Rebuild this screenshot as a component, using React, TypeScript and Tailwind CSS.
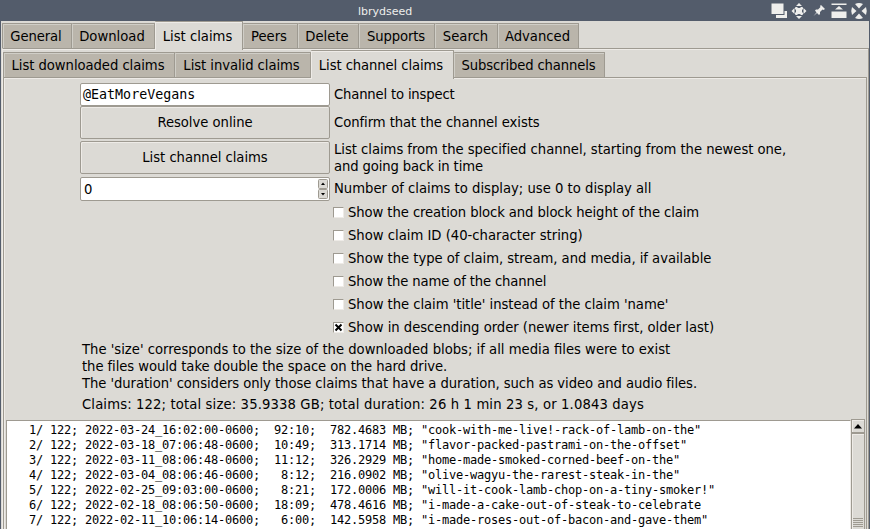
import React from "react";

const outerTabs = [
  { label: "General", w: "w-[70px] pr-[2px] tracking-[-0.1px]" },
  { label: "Download", w: "w-[83px] pr-[2px]" },
  { label: "List claims", w: "w-[88px] pr-[2px]" },
  { label: "Peers", w: "w-[55px] pr-[2px]" },
  { label: "Delete", w: "w-[61px] pr-[2px]" },
  { label: "Supports", w: "w-[76px] pr-px tracking-[-0.1px]" },
  { label: "Search", w: "w-[63px] pr-px" },
  { label: "Advanced", w: "w-[81px] pr-px" },
];
const innerTabs = [
  { label: "List downloaded claims", w: "w-[172px] pr-[2px] tracking-[-0.05px]" },
  { label: "List invalid claims", w: "w-[136px] pr-[2px] tracking-[-0.06px]" },
  { label: "List channel claims", w: "w-[143px] pr-[2px] tracking-[-0.09px]" },
  { label: "Subscribed channels", w: "w-[151px] pr-px tracking-[-0.13px]" },
];
const checks = [
  { label: "Show the creation block and block height of the claim", ls: "tracking-[-0.08px]" },
  { label: "Show claim ID (40-character string)", ls: "" },
  { label: "Show the type of claim, stream, and media, if available", ls: "tracking-[-0.03px]" },
  { label: "Show the name of the channel", ls: "tracking-[-0.14px]" },
  { label: "Show the claim 'title' instead of the claim 'name'", ls: "tracking-[-0.04px]" },
  { label: "Show in descending order (newer items first, older last)", ls: "tracking-[-0.02px]" },
];
const claims = [
  `  1/ 122; 2022-03-24_16:02:00-0600;  92:10;  782.4683 MB; "cook-with-me-live!-rack-of-lamb-on-the"`,
  `  2/ 122; 2022-03-18_07:06:48-0600;  10:49;  313.1714 MB; "flavor-packed-pastrami-on-the-offset"`,
  `  3/ 122; 2022-03-11_08:06:48-0600;  11:12;  326.2929 MB; "home-made-smoked-corned-beef-on-the"`,
  `  4/ 122; 2022-03-04_08:06:46-0600;   8:12;  216.0902 MB; "olive-wagyu-the-rarest-steak-in-the"`,
  `  5/ 122; 2022-02-25_09:03:00-0600;   8:21;  172.0006 MB; "will-it-cook-lamb-chop-on-a-tiny-smoker!"`,
  `  6/ 122; 2022-02-18_08:06:50-0600;  18:09;  478.4616 MB; "i-made-a-cake-out-of-steak-to-celebrate`,
  `  7/ 122; 2022-02-11_10:06:14-0600;   6:00;  142.5958 MB; "i-made-roses-out-of-bacon-and-gave-them"`,
];

function Tabs({ tabs, active }: { tabs: { label: string; w: string }[]; active: number }) {
  return (
    <div className="flex h-[27px] items-end">
      {tabs.map((t, i) => (
        <div
          key={t.label}
          className={`${t.w} relative flex shrink-0 items-center justify-center rounded-t-[1px] border-t border-r border-[#9e9a91] ${
            i === active
              ? "z-10 -mb-[2px] h-[29px] bg-[#dcdad5] pb-[2px] shadow-[inset_1px_1px_0_#eeebe7]"
              : "h-[25px] bg-[#bab5ab] pb-[2px] shadow-[inset_1px_1px_0_#d0cec7]"
          } ${i === 0 ? "border-l" : ""}`}
        >
          {t.label}
        </div>
      ))}
    </div>
  );
}

function Button({ children }: { children: React.ReactNode }) {
  return (
    <div className="flex h-[33px] w-[250px] items-center justify-center rounded-[2px] border border-[#9e9a91] pb-[2px] tracking-[-0.03px] shadow-[inset_1px_1px_0_#eeebe7]">
      {children}
    </div>
  );
}

function TitleIcons() {
  return (
    <svg width="120" height="21" viewBox="750 0 120 21" fill="#eeeeec">
      <path d="M771.500 3.500h12v10.500h-12zM784.500 11h2.500v7h-11v-3h8.500z" />
      <path d="M799 3l3 3h-6zM799 19l3-3h-6zM791.500 11l3-3v6zM806.500 11l-3-3v6zM796 8h6v6h-6z" />
      <path d="M795.500 9.500v-2h2M800.500 7.500h2v2M802.500 12.500v2h-2M797.500 14.500h-2v-2" fill="none" stroke="#eeeeec" />
      <path d="M821 5l4 4-1.500 1-1-.5-2.500 2.500v2l-1 1-2-2-3.500 3 3-3.500-1.500-2 1-1h2l2.500-2.500-.5-1z" />
      <path d="M831.500 3.500h15v1.500h-15zM839 6l4 3.500h-8zM831.500 11.500h15v6.500h-15z" />
      <path d="M855 4q4-2 8 0l-4 4.500zM855 18q4 2 8 0l-4-4.500zM852 7q-1.500 4 0 8l4.500-4zM866 7q1.500 4 0 8l-4.500-4z" />
    </svg>
  );
}

export default function App() {
  return (
    <div className="h-[529px] w-[870px] overflow-hidden bg-[#535c6b] font-['DejaVu_Sans_Condensed','DejaVu_Sans',sans-serif] text-[14.67px] leading-[17px] [font-stretch:condensed] whitespace-nowrap text-black">
      <div className="flex h-[21px] items-center justify-between font-['DejaVu_Sans',sans-serif] text-[11px] [font-stretch:normal] text-[#eeeeec]">
        <span className="pt-[2px] pl-[358px]">lbrydseed</span>
        <TitleIcons />
      </div>
      <div className="mr-[1px] ml-[1px] h-[508px] bg-[#dcdad5] pl-px">
        <Tabs tabs={outerTabs} active={2} />
        <div className="h-[481px] border-t border-r border-l border-[#9e9a91] border-l-[#eeebe7] pt-px pr-[1px] shadow-[inset_0_1px_0_#eeebe7]">
          <Tabs tabs={innerTabs} active={2} />
          <div className="h-[452px] border-t border-r border-l border-[#9e9a91] pt-[5px] shadow-[inset_1px_1px_0_#eeebe7]">
            <div className="grid grid-cols-[250px_1fr] gap-x-[4px] pl-[76px]">
              <div className="flex h-[23px] items-center rounded-[2px] border border-[#9e9a91] bg-white pl-[2px] font-['DejaVu_Sans_Mono',monospace] text-[13.33px] [font-stretch:normal]">
                @EatMoreVegans
              </div>
              <div className="pt-[2px] tracking-[-0.17px]">Channel to inspect</div>
              <Button>Resolve online</Button>
              <div className="pt-[7px] tracking-[-0.06px]">Confirm that the channel exists</div>
              <div className="pt-[2px]">
                <Button>List channel claims</Button>
              </div>
              <div className="pt-[1px] tracking-[-0.035px]">
                List claims from the specified channel, starting from the newest one,
                <br />
                <span className="tracking-[-0.12px]">and going back in time</span>
              </div>
              <div className="mt-[3px] flex h-[24px] items-center justify-between rounded-[2px] border border-[#9e9a91] bg-white pr-px pl-[3px]">
                <span className="pb-[2px]">0</span>
                <div className="flex flex-col">
                  {["M5 3.500l2 2.500H3z", "M3 4h4l-2 2.500z"].map((d) => (
                    <svg key={d} width="10" height="10">
                      <rect x=".5" y=".5" width="9" height="9" rx="1" fill="#dcdad5" stroke="#9e9a91" />
                      <path d={d} />
                    </svg>
                  ))}
                </div>
              </div>
              <div className="pt-[5px]">Number of claims to display; use 0 to display all</div>
            </div>
            <div className="pl-[329px]">
              {checks.map((c, i) => (
                <div key={c.label} className="flex h-[23px] items-center gap-[4px]">
                  <div className="flex h-[11px] w-[11px] items-center justify-center border border-[#eeebe7] border-t-[#9e9a91] border-l-[#9e9a91] bg-white">
                    {i === 5 && (
                      <svg width="9" height="9" stroke="#000" strokeWidth="2">
                        <path d="M1.500 1.500l6 6M7.500 1.500l-6 6" />
                      </svg>
                    )}
                  </div>
                  <span className={`pb-[2px] ${c.ls}`}>{c.label}</span>
                </div>
              ))}
            </div>
            <div className="mt-[1px] pl-[78px]">
              <div>The 'size' corresponds to the size of the downloaded blobs; if all media files were to exist</div>
              <div className="tracking-[-0.07px]">the files would take double the space on the hard drive.</div>
              <div className="tracking-[-0.063px]">
                The 'duration' considers only those claims that have a duration, such as video and audio files.
              </div>
              <div className="mt-[4px] tracking-[0.133px]">
                Claims: 122; total size: 35.9338 GB; total duration: 26 h 1 min 23 s, or 1.0843 days
              </div>
            </div>
            <div className="mt-[7px] ml-[2px] flex h-[112px]">
              <div className="mt-[1px] w-[845px] border-t border-r border-l border-[#9e9a91] border-r-[#eeebe7] bg-white pt-[2px] pl-[8px] font-['DejaVu_Sans_Mono',monospace] text-[12px] leading-[15px] tracking-[-0.224px] [font-stretch:normal]">
                {claims.map((c) => (
                  <div key={c} className="whitespace-pre">
                    {c}
                  </div>
                ))}
              </div>
              <div className="w-[14px] border-x border-t border-[#9e9a91] bg-[#dcdad5]">
                <div className="flex h-[14px] items-center justify-center border-b-2 border-[#9e9a91] shadow-[inset_1px_1px_0_#eeebe7]">
                  <svg width="8" height="5">
                    <path d="M4 0l4 4.500H0z" />
                  </svg>
                </div>
                <div className="flex h-[100px] flex-col gap-px pt-[84px] shadow-[inset_1px_1px_0_#eeebe7]">
                  {[0, 1, 2, 3, 4].map((n) => (
                    <div key={n} className="h-px w-[10px] self-center bg-[#9e9a91]" />
                  ))}
                </div>
              </div>
            </div>
          </div>
        </div>
      </div>
    </div>
  );
}
